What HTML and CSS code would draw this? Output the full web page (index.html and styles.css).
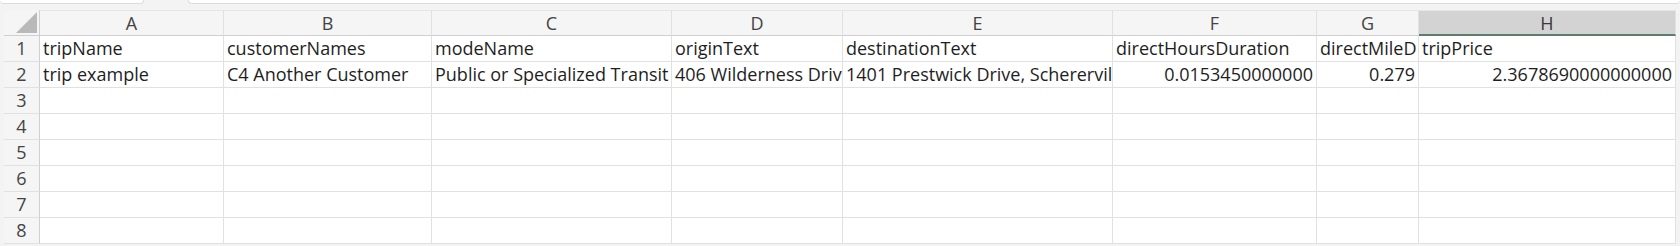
FILE: index.html
```html
<!DOCTYPE html>
<html>
<head>
<meta charset="utf-8">
<link rel="stylesheet" href="styles.css">
</head>
<body>
<div class="app">
  <div class="topstrip">
    <div class="tab tab-left"></div>
    <div class="tab-gap"></div>
    <div class="tab tab-right"></div>
  </div>
  <div class="sheet">
    <div class="grid">
      <div class="corner"><svg class="tri" width="21" height="21" viewBox="0 0 21 21"><polygon points="0,21 21,0 21,21" fill="#b9b9b9"/></svg></div>
      <div class="ch">A</div>
      <div class="ch">B</div>
      <div class="ch">C</div>
      <div class="ch">D</div>
      <div class="ch">E</div>
      <div class="ch">F</div>
      <div class="ch">G</div>
      <div class="ch ch-sel">H</div>

      <div class="rh">1</div>
      <div class="c">tripName</div>
      <div class="c">customerNames</div>
      <div class="c">modeName</div>
      <div class="c">originText</div>
      <div class="c">destinationText</div>
      <div class="c">directHoursDuration</div>
      <div class="c">directMileD</div>
      <div class="c">tripPrice</div>

      <div class="rh">2</div>
      <div class="c">trip example</div>
      <div class="c">C4 Another Customer</div>
      <div class="c">Public or Specialized Transit</div>
      <div class="c">406 Wilderness Driv</div>
      <div class="c">1401 Prestwick Drive, Scherervil</div>
      <div class="c num">0.0153450000000</div>
      <div class="c num">0.279</div>
      <div class="c num">2.3678690000000000</div>

      <div class="rh">3</div><div class="c"></div><div class="c"></div><div class="c"></div><div class="c"></div><div class="c"></div><div class="c"></div><div class="c"></div><div class="c"></div>
      <div class="rh">4</div><div class="c"></div><div class="c"></div><div class="c"></div><div class="c"></div><div class="c"></div><div class="c"></div><div class="c"></div><div class="c"></div>
      <div class="rh">5</div><div class="c"></div><div class="c"></div><div class="c"></div><div class="c"></div><div class="c"></div><div class="c"></div><div class="c"></div><div class="c"></div>
      <div class="rh">6</div><div class="c"></div><div class="c"></div><div class="c"></div><div class="c"></div><div class="c"></div><div class="c"></div><div class="c"></div><div class="c"></div>
      <div class="rh">7</div><div class="c"></div><div class="c"></div><div class="c"></div><div class="c"></div><div class="c"></div><div class="c"></div><div class="c"></div><div class="c"></div>
      <div class="rh">8</div><div class="c"></div><div class="c"></div><div class="c"></div><div class="c"></div><div class="c"></div><div class="c"></div><div class="c"></div><div class="c"></div>
    </div>
  </div>
</div>
</body>
</html>
```
FILE: styles.css
```css
html, body {
  margin: 0;
  padding: 0;
  background: #f3f3f3;
}
.app {
  width: 1680px;
  height: 246px;
  overflow: hidden;
  font-family: "Open Sans", "Noto Sans", sans-serif;
  font-size: 18px;
  color: #1e1e1e;
}
.topstrip {
  height: 10px;
  display: flex;
  align-items: flex-start;
}
.tab {
  height: 3px;
  background: #ffffff;
  border-bottom: 1px solid #dcdcdc;
  border-radius: 0 0 6px 6px;
}
.tab-left {
  width: 143px;
  border-right: 1px solid #dcdcdc;
}
.tab-gap {
  width: 44px;
}
.tab-right {
  flex: 1;
  border-left: 1px solid #dcdcdc;
}
.sheet {
  padding: 0 4px;
}
.grid {
  display: grid;
  grid-template-columns: 36px 184px 208px 240px 171px 270px 204px 102px 257px;
  grid-auto-rows: 26px;
  background: #ffffff;
}
.grid > div {
  box-sizing: border-box;
  border-right: 1px solid #e1e1e1;
  border-bottom: 1px solid #e1e1e1;
  white-space: nowrap;
  overflow: hidden;
  line-height: 25px;
}
.corner {
  background: #f5f5f5;
  display: flex;
  align-items: flex-end;
  justify-content: flex-end;
  padding: 0 2px 2px 0;
  border-right-color: #cfcfcf !important;
  border-bottom-color: #cfcfcf !important;
}
.tri {
  display: block;
}
.ch {
  background: #f5f5f5;
  text-align: center;
  color: #444444;
  border-bottom-color: #cfcfcf !important;
  border-top: 1px solid #e6e6e6;
  line-height: 23px;
}
.ch-sel {
  background: #d3d3d3;
  border-bottom: 2px solid #5b7f6c !important;
  color: #3a3a3a;
}
.rh {
  background: #f5f5f5;
  text-align: center;
  color: #444444;
  border-right-color: #cfcfcf !important;
}
.c {
  padding: 0 3px;
  text-overflow: clip;
}
.num {
  text-align: right;
}
```
